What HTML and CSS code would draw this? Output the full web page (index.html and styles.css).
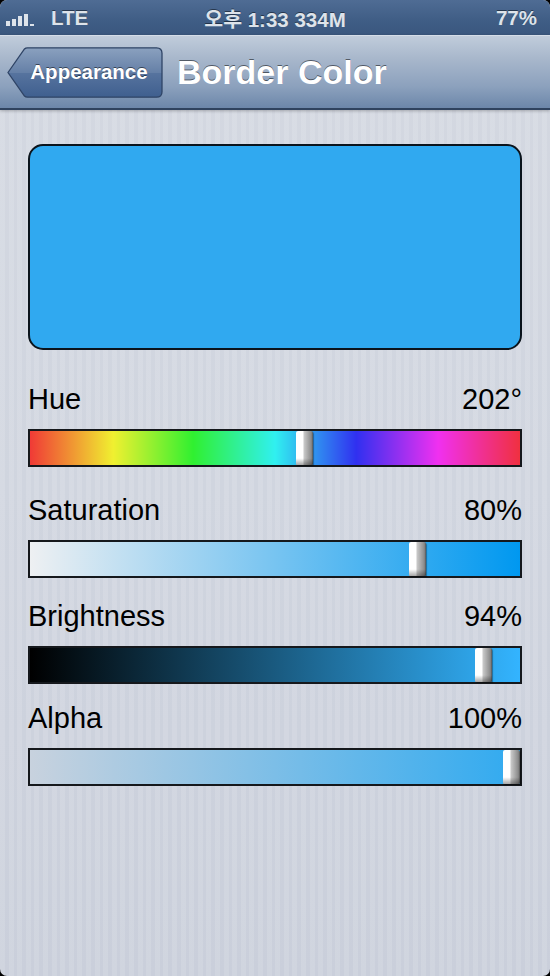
FILE: index.html
```html
<!DOCTYPE html>
<html>
<head>
<meta charset="utf-8">
<link rel="stylesheet" href="styles.css">
</head>
<body>
<div class="app">
  <div class="statusbar">
    <div class="sb-left">
      <svg class="signal" width="36" height="16" viewBox="0 0 36 16">
        <rect x="0" y="10" width="4" height="5" fill="#dde3ea"/>
        <rect x="6" y="8" width="4" height="7" fill="#dde3ea"/>
        <rect x="12" y="5" width="4" height="10" fill="#dde3ea"/>
        <rect x="18" y="3" width="4" height="12" fill="#dde3ea"/>
        <rect x="24" y="13" width="4" height="2" fill="#dde3ea"/>
      </svg>
      <span>LTE</span>
    </div>
    <div class="sb-center">오후 1:33 334M</div>
    <div class="sb-right">77%</div>
  </div>
  <div class="navbar">
    <div class="back">
      <svg class="back-shape" width="156" height="51" viewBox="0 0 156 51">
        <defs>
          <linearGradient id="bg" x1="0" y1="0" x2="0" y2="1">
            <stop offset="0" stop-color="#8ba1bf"/>
            <stop offset="0.5" stop-color="#6580a7"/>
            <stop offset="0.52" stop-color="#56739e"/>
            <stop offset="1" stop-color="#3f5f8f"/>
          </linearGradient>
        </defs>
        <path d="M1 25.5 L17.5 2 Q18.5 0.8 20.5 0.8 H149.5 Q155 0.8 155 6.3 V44.7 Q155 50.2 149.5 50.2 H20.5 Q18.5 50.2 17.5 49 Z" fill="url(#bg)" stroke="#2f4466" stroke-width="1.3"/>
      </svg>
      <span class="back-label">Appearance</span>
    </div>
    <div class="title">Border Color</div>
  </div>
  <main class="content">
    <div class="swatch"></div>

    <section class="slider sec-hue">
      <div class="row"><span>Hue</span><span>202°</span></div>
      <div class="bar bar-hue"><div class="knob" style="--v:0.561"></div></div>
    </section>

    <section class="slider sec-sat">
      <div class="row"><span>Saturation</span><span>80%</span></div>
      <div class="bar bar-sat"><div class="knob" style="--v:0.8"></div></div>
    </section>

    <section class="slider sec-bri">
      <div class="row"><span>Brightness</span><span>94%</span></div>
      <div class="bar bar-bri"><div class="knob" style="--v:0.94"></div></div>
    </section>

    <section class="slider sec-alpha">
      <div class="row"><span>Alpha</span><span>100%</span></div>
      <div class="bar bar-alpha"><div class="knob" style="--v:1"></div></div>
    </section>
  </main>
</div>
</body>
</html>
```

FILE: styles.css
```css
* { box-sizing: border-box; }
html, body {
  margin: 0;
  padding: 0;
  background: #000;
  width: 550px;
  height: 976px;
  overflow: hidden;
}
.app {
  width: 550px;
  height: 976px;
  border-radius: 7px;
  overflow: hidden;
  display: flex;
  flex-direction: column;
  font-family: "Liberation Sans", Arial, "Noto Sans CJK KR", sans-serif;
  background:
    repeating-linear-gradient(to right, rgba(255,255,255,0.12) 0 5px, rgba(0,0,0,0) 5px 8.6px),
    linear-gradient(to bottom, #d4d8e1 0%, #d0d5df 50%, #cacfdb 100%);
}
.statusbar {
  height: 35px;
  flex: none;
  display: flex;
  align-items: center;
  justify-content: space-between;
  padding: 0 13px 0 6px;
  background: linear-gradient(to bottom, #4f6c94 0%, #3f5d85 60%, #3a577e 100%);
  color: #dde3ea;
  font-weight: bold;
  font-size: 20.5px;
  text-shadow: 0 -1px 0 rgba(0,0,0,0.45);
  position: relative;
}
.sb-left {
  display: flex;
  align-items: center;
  gap: 9px;
  width: 130px;
}
.signal { display: block; margin-top: 2px; }
.sb-center {
  position: absolute;
  left: 0;
  right: 0;
  text-align: center;
  pointer-events: none;
  font-family: "Liberation Sans", "Noto Sans CJK KR", sans-serif;
}
.sb-right { width: 130px; text-align: right; }

.navbar {
  height: 75px;
  flex: none;
  display: flex;
  align-items: center;
  gap: 15px;
  padding: 0 0 0 7px;
  background: linear-gradient(to bottom, #c0ccdb 0%, #a9b8cc 30%, #8ca1bd 70%, #6c87aa 100%);
  border-top: 1px solid #d5dde8;
  border-bottom: 2px solid #2f435f;
  box-shadow: 0 1px 3px rgba(0,0,0,0.25);
  position: relative;
  z-index: 1;
}
.back {
  position: relative;
  width: 156px;
  height: 51px;
  flex: none;
  display: flex;
  align-items: center;
  justify-content: center;
  padding-left: 8px;
}
.back-shape {
  position: absolute;
  left: 0;
  top: 0;
}
.back-label {
  position: relative;
  color: #fff;
  font-weight: bold;
  font-size: 20.5px;
  text-shadow: 0 -1px 0 rgba(0,0,0,0.5);
}
.title {
  color: #fff;
  font-weight: bold;
  font-size: 34px;
  text-shadow: 0 -1px 0 rgba(0,0,0,0.5);
  margin-left: -1px;
}

.content {
  padding: 34px 28px 0 28px;
  display: flex;
  flex-direction: column;
}
.swatch {
  height: 206px;
  border: 2px solid #0b141c;
  border-radius: 15px;
  background: #30a9f0;
}
.slider { display: flex; flex-direction: column; }
.sec-hue { margin-top: 32px; }
.sec-sat { margin-top: 26px; }
.sec-bri { margin-top: 21px; }
.sec-alpha { margin-top: 17px; }
.row {
  display: flex;
  justify-content: space-between;
  font-size: 29px;
  line-height: 34px;
  height: 34px;
  color: #000;
}
.bar {
  position: relative;
  margin-top: 13px;
  height: 38px;
  border: 2px solid #15181c;
}
.bar-hue {
  background: linear-gradient(to right,
    #f03a36 0%, #f0f030 17%, #30f030 33.3%, #30f0f0 50%,
    #3030f0 66.6%, #f030f0 83.3%, #f03040 100%);
}
.bar-sat {
  background: linear-gradient(to right, #eef0f2 0%, #0098f0 100%);
}
.bar-bri {
  background: linear-gradient(to right, #000 0%, #33b4ff 100%);
}
.bar-alpha {
  background: linear-gradient(to right, #c8d2de 0%, #30aaf0 100%);
}
.knob {
  position: absolute;
  top: 0;
  bottom: 0;
  width: 17px;
  left: calc(1px + var(--v) * (100% - 18px));
  background:
    linear-gradient(to bottom, rgba(0,0,0,0) 0%, rgba(0,0,0,0) 80%, rgba(0,0,0,0.35) 100%),
    linear-gradient(to right, #ffffff 0%, #ffffff 40%, #c8c8c8 48%, #a8a8a8 70%, #8a8a8a 90%, #555 100%);
  border-radius: 2px 2px 1px 1px;
  box-shadow: 1px 1px 1px rgba(0,0,0,0.35);
}
```
